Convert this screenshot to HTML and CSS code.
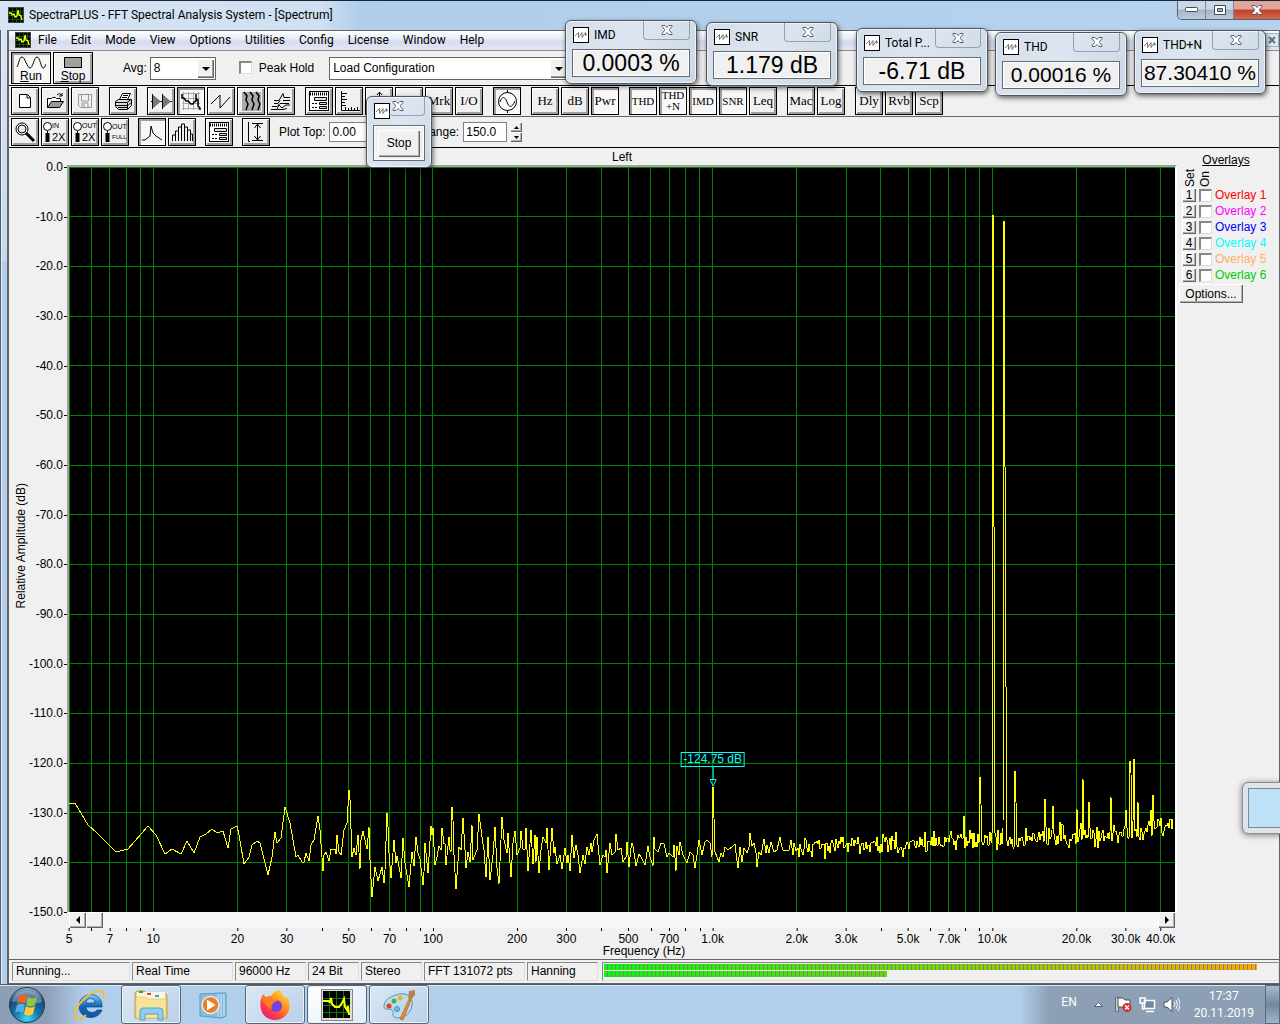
FILE: index.html
```html
<!DOCTYPE html>
<html lang="en">
<head>
    <meta charset="UTF-8">
    <meta name="viewport" content="width=device-width, initial-scale=1.0">
    <title>SpectraPLUS - FFT Spectral Analysis System - [Spectrum]</title>
    <link rel="stylesheet" href="styles.css">
</head>
<body>

    <!-- Shared icons -->
    <svg class="defs" aria-hidden="true">
        <symbol id="app" viewBox="0 0 16 16">
            <rect width="16" height="16" fill="#444"/><rect x="1" y="1" width="14" height="14" fill="#000"/>
            <path d="M4.500 1v14M8.500 1v14M12.500 1v14M1 4.500h14M1 8.500h14M1 12.500h14" stroke="#075a07"/>
            <path d="M1 6h2l1 2 2-1 1 3 2-1 1-6 1 5 2 1 1 4" fill="none" stroke="#ff0" stroke-width="1.300"/>
        </symbol>
        <symbol id="wave" viewBox="0 0 16 16">
            <rect x=".5" y=".5" width="15" height="15" fill="#fff" stroke="#000"/>
            <path d="M2 9l3.500-3.500v5l3.500-5v5l3.500-5v3L14 7" fill="none" stroke="#555" stroke-width=".8"/>
        </symbol>
        <symbol id="cross" viewBox="0 0 12 10">
            <path d="M1 .5h3l2 2 2-2h3v1L8.500 4.500v1L11 8.500v1H8l-2-2-2 2H1v-1l2.500-3v-1L1 1.500z" fill="#fff" stroke="#565d6b"/>
        </symbol>
        <symbol id="form" viewBox="0 0 24 24">
            <rect x="2.500" y="2.500" width="19" height="19" fill="#fff" stroke="#000"/>
            <path d="M3 5h18" stroke="#000" stroke-width="3" stroke-dasharray="1 1"/>
            <path d="M7.500 8.500h12v3h-12zM12.500 13.500h7v2h-7zM12.500 17.500h7v2h-7z" fill="#ddd" stroke="#000"/>
            <path d="M5 14.500h6M5 18.500h6" stroke="#000" stroke-dasharray="2 1"/>
        </symbol>
        <symbol id="lens" viewBox="0 0 24 24">
            <circle cx="5.500" cy="6.500" r="4" fill="#fff" stroke="#000"/>
            <path d="M5.500 11v3" stroke="#000"/><path d="M5.500 13v9" stroke="#000" stroke-width="4"/>
        </symbol>
    </svg>

    <main class="window">
        <header class="titlebar">
            <svg class="icon16"><use href="#app"/></svg>
            <h1>SpectraPLUS - FFT Spectral Analysis System - [Spectrum]</h1>
            <div class="caption-buttons">
                <button aria-label="Minimize"><svg width="13" height="6"><rect x=".5" y=".5" width="12" height="4" rx="1" fill="#fff" stroke="#444b5a"/></svg></button>
                <button aria-label="Restore"><svg width="12" height="10"><path d="M.5.5h11v9H.5z" fill="#fff" stroke="#444b5a"/><path d="M3.500 3.500h5v3h-5z" fill="#9fb0c5" stroke="#444b5a"/></svg></button>
                <button class="close" aria-label="Close"><svg width="12" height="10"><use href="#cross"/></svg></button>
            </div>
        </header>

        <div class="client">
            <nav class="menubar">
                <svg class="icon16"><use href="#app"/></svg>
                <button>File</button>
                <button>Edit</button>
                <button>Mode</button>
                <button>View</button>
                <button>Options</button>
                <button>Utilities</button>
                <button>Config</button>
                <button>License</button>
                <button>Window</button>
                <button>Help</button>
                <button class="mdi-close" aria-label="Close document"><svg width="8" height="8"><path d="M1 1l6 6M7 1L1 7" stroke="#5d7186" stroke-width="2"/></svg></button>
            </nav>

            <div class="toolbar run-bar">
                <button class="big pressed"><svg width="30" height="13" viewBox="0 0 30 13"><path d="M1 11C3 8 3 1 6 1s5 11 8 11S18 1 21 1s4 11 6 11 2-2 3-4" fill="none" stroke="#000"/></svg><span><u>R</u>un</span></button>
                <button class="big"><svg width="30" height="13"><rect x="6.500" y="1.500" width="17" height="10" fill="#a0a0a0" stroke="#000"/></svg><span><u>S</u>top</span></button>
                <label class="avg" for="avg">Avg:</label>
                <span class="combo avg-combo"><select id="avg"><option>8</option></select></span>
                <label class="peak"><input type="checkbox"> Peak Hold</label>
                <span class="combo config-combo"><select aria-label="Configuration"><option>Load Configuration</option></select></span>
            </div>

            <div class="toolbar">
                <div class="group">
                    <button class="tool" aria-label="New"><svg><path d="M6.500 5.500h8l3 3v10h-11zM14 6v3h3" fill="#fff" stroke="#000"/></svg></button>
                    <button class="tool" aria-label="Open"><svg><path d="M4.500 18.500v-9h4l1-1h3l1 1h4v3" fill="#fff" stroke="#000"/><path d="M4.500 18.500l4-6h12l-4 6z" fill="#999" stroke="#000"/><path d="M14 6q3-3 5 1m0-3v3h-3" fill="none" stroke="#000"/></svg></button>
                    <button class="tool" aria-label="Save" disabled><svg><path d="M5.500 5.500h13v13h-11l-2-2zM8.500 6v6h7V6M9 18v-4h6v4M11 15v3" fill="none" stroke="#999"/></svg></button>
                </div>
                <div class="group">
                    <button class="tool" aria-label="Print"><svg><path d="M8.500 10.500l3-6h8l-3 6" fill="#fff" stroke="#000"/><path d="M12 6.500h5M11 8.500h5" stroke="#000"/><path d="M4.500 12.500l3-2h13v6l-4 4h-9l-3-3z" fill="#ddd" stroke="#000"/><path d="M5 13.500h11l4-3M5 16.500h12l3-3M7 18.500h9M16.500 14v6" fill="none" stroke="#000"/></svg></button>
                </div>
                <div class="group">
                    <button class="tool" aria-label="Time series"><svg><path d="M2 12.500h21" stroke="#000"/><path d="M3.500 5v15M5.500 7v11M7.500 9v7M9.500 11v3M13.500 5v15M15.500 7v11M17.500 9v7M19.500 11v3" stroke="#000"/><path d="M4 6l8 6.500L4 19M14 6l8 6.500L14 19" fill="#777"/></svg></button>
                    <button class="tool pressed" aria-label="Spectrum"><svg><path d="M3 4.500h18M3 9.500h18M3 14.500h18M3 19.500h18M4.500 3v18M9.500 3v18M14.500 3v18M19.500 3v18" stroke="#aaa"/><path d="M3 5v4h2l2 3h2l3 3h2l1-2 2-1V5m0 5l2 1v6l2 2v2" fill="none" stroke="#000" stroke-width="1.500"/></svg></button>
                    <button class="tool" aria-label="Phase"><svg><path d="M2 15L11 6v13L21 8" fill="none" stroke="#000"/></svg></button>
                    <button class="tool" aria-label="Spectrogram"><svg><rect x="3" y="3" width="19" height="19" fill="#aaa"/><path d="M5 3l3 4-1 4 2 4-2 6M11 3l3 4-1 4 2 4-2 6M17 3l3 4-1 4 2 4-2 6" fill="none" stroke="#000" stroke-width="1.500"/></svg></button>
                    <button class="tool" aria-label="3-D surface"><svg><path d="M2 20.500h12l4-1M3 17.500h5l3-3h9M5 14.500h4l2-3M14 11.500h7M5 11.500h5l4-7 1 4h6M8 20l2-4 3 3 4-3h4" fill="none" stroke="#000"/></svg></button>
                </div>
                <div class="group">
                    <button class="tool" aria-label="Settings"><svg><use href="#form"/></svg></button>
                    <button class="tool" aria-label="Scaling"><svg><path d="M4.500 2v19.500H23M5 4.500h5M5 7.500h3M5 10.500h5M5 13.500h3M5 16.500h4M8.500 18v3M11.500 19v2M14.500 18v3M17.500 19v2M20.500 18v3" fill="none" stroke="#000"/></svg></button>
                    <button class="tool" aria-label="Calibration"><svg><path d="M12.500 3v18M10 6l2.500-3L15 6" fill="none" stroke="#000"/></svg></button>
                    <button class="tool" aria-label="Markers"><svg><path d="M12 8v13M8 12h8" stroke="#000"/></svg></button>
                    <button class="tool">Mrk</button>
                    <button class="tool">I/O</button>
                </div>
                <div class="group">
                    <button class="tool pressed" aria-label="Signal generator"><svg><circle cx="12.500" cy="12.500" r="9" fill="#fff" stroke="#000"/><path d="M12.500 1v3M12.500 21v3M5 13c2-6 5-6 7 0s5 6 8-1" fill="none" stroke="#000"/></svg></button>
                </div>
                <div class="group">
                    <button class="tool">Hz</button>
                    <button class="tool">dB</button>
                    <button class="tool pressed">Pwr</button>
                </div>
                <div class="group">
                    <button class="tool narrow pressed">THD</button>
                    <button class="tool narrow pressed">THD<br>+N</button>
                    <button class="tool narrow pressed">IMD</button>
                    <button class="tool narrow pressed">SNR</button>
                    <button class="tool">Leq</button>
                </div>
                <div class="group">
                    <button class="tool">Mac</button>
                    <button class="tool">Log</button>
                </div>
                <div class="group">
                    <button class="tool">Dly</button>
                    <button class="tool">Rvb</button>
                    <button class="tool">Scp</button>
                </div>
            </div>

            <div class="toolbar plot-bar">
                <div class="group">
                    <button class="tool" aria-label="Zoom"><svg><circle cx="9" cy="9" r="6" fill="#fff" stroke="#000"/><circle cx="9" cy="9" r="4" fill="#eee" stroke="#000"/><path d="M13 13l8 8" stroke="#000" stroke-width="3"/></svg></button>
                    <button class="tool zoom"><svg><use href="#lens"/></svg><span>IN<b>2X</b></span></button>
                    <button class="tool zoom"><svg><use href="#lens"/></svg><span>OUT<b>2X</b></span></button>
                    <button class="tool zoom"><svg><use href="#lens"/></svg><span>OUT<i>FULL</i></span></button>
                </div>
                <div class="group">
                    <button class="tool pressed" aria-label="Line plot"><svg><path d="M2 20h3l5-4 1-10 2 7 3 3 6 4" fill="none" stroke="#000"/></svg></button>
                    <button class="tool" aria-label="Bar plot"><svg><path d="M2.500 21v-6h3v-4h3V7h3V4h3v3h3v3h3v4h2v7M5.500 21V11M8.500 21V7M11.500 21V5M14.500 21V5M17.500 21V8M20.500 21V11" fill="none" stroke="#000"/></svg></button>
                </div>
                <div class="group">
                    <button class="tool" aria-label="Plot options"><svg><use href="#form"/></svg></button>
                </div>
                <div class="group">
                    <button class="tool" aria-label="Autoscale"><svg><path d="M4.500 2v19.500H6M8 3.500h11M8 20.500h11M13.500 4v16M10.500 8l3-4 3 4M10.500 16l3 4 3-4" fill="none" stroke="#000"/></svg></button>
                </div>
                <label for="top">Plot Top:</label>
                <input id="top" class="field top-field" type="text" value="0.00">
                <label for="range">Plot Range:</label>
                <input id="range" class="field" type="text" value="150.0">
                <span class="spinner">
                    <button aria-label="Increase range"><svg width="5" height="3"><path d="M0 3l2.500-3L5 3z"/></svg></button>
                    <button aria-label="Decrease range"><svg width="5" height="3"><path d="M0 0l2.500 3L5 0z"/></svg></button>
                </span>
            </div>

            <section class="view">
                <div class="y-title">Relative Amplitude (dB)</div>
                <ul class="y-labels" id="yLabels"></ul>
                <div class="chart">
                    <h2>Left</h2>
                    <div class="plot">
                        <svg viewBox="0 0 1106 745" preserveAspectRatio="none">
                            <path id="grid" class="grid"/>
                            <path id="trace" class="trace"/>
                        </svg>
                        <div class="marker">
                            <span>-124.75 dB</span>
                            <svg width="7" height="20"><path d="M3.500 0v12M0 12.500h7M.5 13l3 6 3-6" fill="none" stroke="#0ff"/></svg>
                        </div>
                    </div>
                    <div class="scrollbar">
                        <button aria-label="Scroll left"><svg width="4" height="8"><path d="M4 0v8L0 4z"/></svg></button>
                        <button class="thumb" aria-label="Scroll position"></button>
                        <button class="right" aria-label="Scroll right"><svg width="4" height="8"><path d="M0 0v8l4-4z"/></svg></button>
                    </div>
                    <ul class="x-labels" id="xLabels"></ul>
                    <div class="x-title">Frequency (Hz)</div>
                </div>
                <aside class="overlays">
                    <h2>Overlays</h2>
                    <div class="heads"><span>Set</span><span>On</span></div>
                    <div class="row"><button>1</button><label class="c1"><input type="checkbox">Overlay 1</label></div>
                    <div class="row"><button>2</button><label class="c2"><input type="checkbox">Overlay 2</label></div>
                    <div class="row"><button>3</button><label class="c3"><input type="checkbox">Overlay 3</label></div>
                    <div class="row"><button>4</button><label class="c4"><input type="checkbox">Overlay 4</label></div>
                    <div class="row"><button>5</button><label class="c5"><input type="checkbox">Overlay 5</label></div>
                    <div class="row"><button>6</button><label class="c6"><input type="checkbox">Overlay 6</label></div>
                    <button class="options">Options...</button>
                </aside>
            </section>

            <footer class="statusbar">
                <span class="wide">Running...</span>
                <span class="mid">Real Time</span>
                <span class="rate">96000 Hz</span>
                <span class="bits">24 Bit</span>
                <span class="chan">Stereo</span>
                <span class="mid">FFT 131072 pts</span>
                <span class="rate">Hanning</span>
                <div class="meters">
                    <div class="meter" style="width: 97%"></div>
                    <div class="meter low" style="width: 42%"></div>
                </div>
            </footer>
        </div>
    </main>

    <!-- Floating readouts -->
    <section class="float imd large">
        <header><svg class="icon16"><use href="#wave"/></svg><h3>IMD</h3><button aria-label="Close IMD"><svg width="12" height="10"><use href="#cross"/></svg></button></header>
        <output>0.0003 %</output>
    </section>
    <section class="float snr large">
        <header><svg class="icon16"><use href="#wave"/></svg><h3>SNR</h3><button aria-label="Close SNR"><svg width="12" height="10"><use href="#cross"/></svg></button></header>
        <output>1.179 dB</output>
    </section>
    <section class="float power large">
        <header><svg class="icon16"><use href="#wave"/></svg><h3>Total P...</h3><button aria-label="Close Total Power"><svg width="12" height="10"><use href="#cross"/></svg></button></header>
        <output>-6.71 dB</output>
    </section>
    <section class="float thd">
        <header><svg class="icon16"><use href="#wave"/></svg><h3>THD</h3><button aria-label="Close THD"><svg width="12" height="10"><use href="#cross"/></svg></button></header>
        <output>0.00016 %</output>
    </section>
    <section class="float thdn">
        <header><svg class="icon16"><use href="#wave"/></svg><h3>THD+N</h3><button aria-label="Close THD+N"><svg width="12" height="10"><use href="#cross"/></svg></button></header>
        <output>87.30410 %</output>
    </section>
    <section class="float stopper">
        <header><svg class="icon16"><use href="#wave"/></svg><button aria-label="Close Stop"><svg width="12" height="10"><use href="#cross"/></svg></button></header>
        <div class="box"><button>Stop</button></div>
    </section>
    <div class="edge-window"></div>

    <footer class="taskbar">
        <button class="start" aria-label="Start">
            <svg width="38" height="38" viewBox="0 0 38 38">
                <defs>
                    <radialGradient id="orb" cx=".5" cy=".9" r=".9"><stop offset="0" stop-color="#3fd8f5"/><stop offset=".4" stop-color="#1672ac"/><stop offset=".75" stop-color="#1c4a75"/><stop offset="1" stop-color="#9dbbd0"/></radialGradient>
                </defs>
                <circle cx="19" cy="19" r="17.500" fill="url(#orb)" stroke="#173a5c"/>
                <path d="M4 16C7 1 31 1 34 16 24 20 14 13 4 16z" fill="#fff" opacity=".3"/>
                <path d="M11 10c3-2 5-2 8 0l-2 8c-3-2-5-2-8 0z" fill="#f0612a"/>
                <path d="M20 11c3 2 6 2 9 0l-2 8c-3 2-6 2-9 0z" fill="#93c83d"/>
                <path d="M9 19c3-2 5-2 8 0l-2 8c-3-2-5-2-8 0z" fill="#4fb0ea"/>
                <path d="M18 20c3 2 6 2 9 0l-2 8c-3 2-6 2-9 0z" fill="#fdcb3a"/>
            </svg>
        </button>
        <button class="task plain" aria-label="Internet Explorer">
            <svg width="34" height="32" viewBox="0 0 34 32">
                <defs><linearGradient id="ie" x2="0" y2="1"><stop offset="0" stop-color="#7ed0f8"/><stop offset=".5" stop-color="#1368b8"/><stop offset="1" stop-color="#0e56a4"/></linearGradient></defs>
                <path d="M30 18H14c0 6 9 7 11 3h5c-4 11-23 10-23-4 0-15 24-16 23 1zM14 14h9c0-6-9-6-9 0z" fill="url(#ie)" stroke="#0b3f80" stroke-width=".7"/>
                <path d="M31 9C35-2 20 1 11 11 3 19 1 29 5 30c3 1 7-2 9-4" fill="none" stroke="#f3bd35" stroke-width="2"/>
            </svg>
        </button>
        <button class="task" aria-label="Windows Explorer">
            <svg width="34" height="32" viewBox="0 0 34 32">
                <path d="M1 4l2-2h7l2 2h19l2 3v22H1z" fill="#ecd27a" stroke="#b89b45"/>
                <path d="M3 3h28v9H3z" fill="#fbf6df"/>
                <path d="M5 2h4v2H5z" fill="#28a83a"/><path d="M13 4h4v2h-4z" fill="#dd4a33"/><path d="M21 6h4v2h-4z" fill="#3c9bea"/>
                <path d="M2 8h10l2 2h18v19H2z" fill="#f7e49b" stroke="#d8bd62" stroke-width=".6"/>
                <path d="M6 31V22q0-3 3-3h17q3 0 3 3v9h-5v-6H11v6z" fill="#8ed0ee" stroke="#5a9fc4"/>
            </svg>
        </button>
        <button class="task plain" aria-label="Media Player">
            <svg width="30" height="28" viewBox="0 0 30 28">
                <path d="M2 3l22-1h4v23l-4 2-22-2z" fill="#88bcdc" stroke="#5d9cc2"/><path d="M20 3v23M23 3v23M26 3v22" stroke="#d2ebf8"/>
                <circle cx="12.500" cy="14" r="8.500" fill="#f47b20" stroke="#e1eef6" stroke-width="1.500"/><path d="M9 8.500v11l8.500-5.500z" fill="#fff"/>
            </svg>
        </button>
        <button class="task" aria-label="Firefox">
            <svg width="32" height="32" viewBox="0 0 32 32">
                <defs><linearGradient id="ff" x1="1" y1="0" x2=".2" y2="1"><stop offset="0" stop-color="#fff14a"/><stop offset=".4" stop-color="#ff9a1f"/><stop offset=".75" stop-color="#ff3b47"/><stop offset="1" stop-color="#e31587"/></linearGradient></defs>
                <path d="M21 1c1 4 4 5 5 8l2-1c7 12-1 23-12 23S-2 20 3 7l2-2 1 3 5-1 1 0c2-3 5-6 9-6z" fill="url(#ff)"/>
                <circle cx="17" cy="17" r="6" fill="#7542e5"/>
                <path d="M3 8l4 1 5-2c0 3 3 3 7 4-1 2-5 2-5 4-2 1-2 3-1 5-5-2-9-6-10-12z" fill="#ff7e1c"/>
            </svg>
        </button>
        <button class="task active" aria-label="SpectraPLUS">
            <svg width="32" height="32" viewBox="0 0 32 32">
                <rect x=".5" y=".5" width="31" height="31" fill="#ddd" stroke="#888"/><rect x="2" y="2" width="27" height="27" fill="#000"/>
                <path d="M8.500 2v27M15.500 2v27M22.500 2v27M2 9.500h27M2 16.500h27M2 23.500h27" stroke="#087a08"/>
                <path d="M2 12h5l2 1 1-4 1 6 3 3h4l3-4 2-4 1 8 2 3 1-4 1 9" fill="none" stroke="#ff0" stroke-width="2"/>
            </svg>
        </button>
        <button class="task" aria-label="Paint">
            <svg width="34" height="32" viewBox="0 0 34 32">
                <path d="M14 6c10-4 18 2 16 11-2 10-12 14-18 11-3-2 1-5-2-7s-8 1-8-4S7 8 14 6z" fill="#b9dcef" stroke="#4f94bd"/>
                <circle cx="7" cy="17" r="2.500" fill="#e33d2f"/><circle cx="12" cy="12" r="2.500" fill="#4eae3c"/><circle cx="18" cy="9" r="2.500" fill="#f6b221"/><circle cx="15" cy="20" r="2.500" fill="#7ab8dc" stroke="#4b8bb3"/>
                <path d="M18 30l9-20 2 1-8 20z" fill="#e98a2e" stroke="#a95713" stroke-width=".6"/><path d="M26 9l1-7 6-1 0 5-4 5z" fill="#b98254"/>
            </svg>
        </button>
        <div class="tray">
            <span class="lang">EN</span>
            <svg class="caret" width="9" height="5"><path d="M.5 4.500l4-4 4 4z" fill="#fff" stroke="#4b5f75"/></svg>
            <svg width="17" height="17" viewBox="0 0 17 17"><path d="M2 1v15" stroke="#333" stroke-width="3"/><path d="M2 1.500v14" stroke="#fff" stroke-width="1.500"/><path d="M3 2h5l2 2h5v7H3z" fill="#fff" stroke="#455"/><circle cx="12" cy="11.500" r="4.500" fill="#dc2b22"/><path d="M10 9.500l4 4m0-4l-4 4" stroke="#fff" stroke-width="1.500"/></svg>
            <svg width="17" height="17" viewBox="0 0 17 17"><path d="M5.500 4.500h10v8h-10z" fill="#70869c" stroke="#fff" stroke-width="1.500"/><path d="M7 15.500h8M1 2h5v5H1zM3.500 7v6h2" fill="none" stroke="#fff" stroke-width="1.500"/></svg>
            <svg width="17" height="17" viewBox="0 0 17 17"><path d="M1 6h3l5-4.500v14L4 11H1z" fill="#fff" stroke="#455"/><path d="M11 6q2 2.500 0 5M13 4q3 4.500 0 9M15 2q4 6.500 0 13" fill="none" stroke="#fff"/></svg>
            <time class="clock">17:37<br>20.11.2019</time>
            <button class="show-desktop" aria-label="Show desktop"></button>
        </div>
    </footer>

<script src="script.js"></script>
</body>
</html>
```

FILE: styles.css
```css
* {
    box-sizing: border-box;
}

body {
    margin: 0;
    min-height: 100vh;
    display: flex;
    flex-direction: column;
    position: relative;
    overflow: hidden;
    font-family: "Liberation Sans", Arial, sans-serif;
    font-size: 12px;
    line-height: 14px;
    color: #000;
    background: #b1ceea;
}

h1, h2, h3, ul {
    margin: 0;
    padding: 0;
    font-size: 12px;
    font-weight: normal;
    list-style: none;
}

button, input, select {
    font: inherit;
    color: inherit;
    margin: 0;
    padding: 0;
    border: 0;
    border-radius: 0;
    background: #f0f0f0;
}

svg {
    display: block;
    flex: none;
}

.defs {
    position: absolute;
    width: 0;
    height: 0;
}

.icon16 {
    width: 16px;
    height: 16px;
}

/* Main window frame */
.window {
    flex: 1;
    display: flex;
    flex-direction: column;
    padding: 0 0 0 7px;
    border-top: 1px solid #1d2430;
    background: linear-gradient(#dbe7f4, #c5d9ee 260px, #b1ceea 261px);
    box-shadow: inset 1px 0 #54606e, inset 2px 0 #e5eef8;
}

.titlebar {
    display: flex;
    height: 29px;
    margin-left: -7px;
    padding: 0 0 2px 8px;
    gap: 5px;
    align-items: center;
    background: linear-gradient(90deg, #d5e4f2, #cfe0f1 320px, #b0ceeb 360px, #b5d2ee);
    font-family: Roboto, sans-serif;
}

.caption-buttons {
    display: flex;
    align-self: flex-start;
    margin-left: auto;
    height: 19px;
    border: 1px solid #55617a;
    border-width: 0 0 1px 1px;
    border-radius: 0 0 0 5px;
    overflow: hidden;
}

.caption-buttons button {
    display: grid;
    place-items: center;
    width: 28px;
    border-right: 1px solid #7a8798;
    background: linear-gradient(#cbd8e6 45%, #a4b4c7 50%, #bccbdc);
}

.caption-buttons .close {
    width: 46px;
    border: 0;
    background: linear-gradient(#e0a69b 45%, #c23f28 50%, #cf6a4d);
}

.client {
    flex: 1;
    display: flex;
    flex-direction: column;
    border: solid #646464;
    border-width: 1px 1px 1px 2px;
    background: #f0f0f0;
}

.menubar {
    display: flex;
    align-items: center;
    height: 20px;
    padding: 0 0 2px 6px;
    border-bottom: 1px solid #888;
    background: linear-gradient(#fff, #e9edf8 40%, #d6dcef 55%, #e2e6f4);
    font-family: Roboto, sans-serif;
}

.menubar button {
    padding: 0 7px;
    background: none;
}

.menubar .mdi-close {
    margin-left: auto;
    padding: 2px;
    border: 1px solid #9fb0c4;
    background: #dfe9f5;
}

/* Toolbars */
.toolbar {
    display: flex;
    align-items: center;
    height: 31px;
    padding-left: 2px;
    gap: 10px;
    border-bottom: 1px solid #646464;
}

.run-bar {
    height: 35px;
    gap: 0;
    border-color: #000;
}

.plot-bar {
    gap: 9px;
    border-color: #000;
}

.group {
    display: flex;
    gap: 2px;
}

.big, .tool {
    border: 1px solid #000;
    box-shadow: inset 1px 1px #fff, inset -2px -2px #a0a0a0;
}

.pressed {
    box-shadow: inset 2px 2px #a0a0a0, inset -1px -1px #fff;
    background: #f7f7f7;
}

.big {
    display: flex;
    flex-direction: column;
    align-items: center;
    width: 40px;
    height: 32px;
    margin-right: 2px;
    padding-top: 3px;
}

.tool {
    display: grid;
    place-items: center;
    width: 28px;
    height: 28px;
    font-family: "Liberation Serif", serif;
    font-size: 13px;
    white-space: nowrap;
}

.tool svg {
    width: 24px;
    height: 24px;
}

.narrow {
    font-size: 11px;
    line-height: 11px;
}

.zoom {
    display: flex;
    justify-content: flex-start;
    align-items: center;
    overflow: hidden;
    font-family: "Liberation Sans", sans-serif;
    font-size: 7px;
    line-height: 10px;
}

.zoom svg {
    margin-right: -14px;
}

.zoom span {
    text-align: left;
}

.zoom b, .zoom i {
    display: block;
    font-weight: normal;
    font-style: normal;
}

.zoom b {
    font-size: 11px;
    line-height: 12px;
}

.zoom i {
    font-size: 6px;
}

.avg {
    margin-left: 28px;
}

.combo {
    position: relative;
    height: 23px;
    border: 1px solid #646464;
}

.avg-combo {
    width: 66px;
    margin-left: 3px;
}

.config-combo {
    width: 240px;
    margin-left: 15px;
}

.combo select {
    appearance: none;
    width: 100%;
    height: 100%;
    padding-left: 3px;
    background: #fff;
}

.combo::before {
    content: "";
    position: absolute;
    top: 1px;
    right: 1px;
    width: 17px;
    height: 19px;
    background: #f0f0f0;
    box-shadow: inset 1px 1px #fff, inset -1px -1px #646464, inset -2px -2px #a0a0a0;
    pointer-events: none;
}

.combo::after {
    content: "";
    position: absolute;
    top: 9px;
    right: 5px;
    border: 4px solid transparent;
    border-top-color: #000;
    border-bottom: 0;
    pointer-events: none;
}

.peak {
    display: flex;
    gap: 7px;
    margin-left: 23px;
}

input[type="checkbox"] {
    appearance: none;
    width: 13px;
    height: 13px;
    background: #fff;
    border: solid;
    border-width: 2px 1px 1px 2px;
    border-color: #888 #ddd #ddd #888;
}

.field {
    width: 44px;
    height: 20px;
    margin-left: -5px;
    padding-left: 2px;
    border: 1px solid #828282;
    background: #fff;
}

.top-field {
    width: 58px;
}

.spinner {
    display: flex;
    flex-direction: column;
    margin-left: -6px;
}

.spinner button {
    display: grid;
    place-items: center;
    width: 12px;
    height: 10px;
}

.spinner button, .scrollbar button, .overlays button, .box button {
    box-shadow: inset 1px 1px #fff, inset -1px -1px #646464, inset -2px -2px #b0b0b0;
}

/* Spectrum view */
.view {
    flex: 1;
    display: flex;
}

.y-title {
    align-self: center;
    width: 19px;
    padding-right: 5px;
    padding-top: 16px;
    writing-mode: vertical-rl;
    transform: rotate(180deg);
    text-align: center;
}

.y-labels {
    display: flex;
    flex-direction: column;
    justify-content: space-between;
    width: 39px;
    padding: 12px 0 39px;
    line-height: 15px;
    white-space: nowrap;
}

.y-labels li {
    display: flex;
    align-items: center;
    justify-content: flex-end;
    height: 15px;
}

.y-labels li::after {
    content: "";
    width: 3px;
    height: 1px;
    margin-left: 1px;
    background: #000;
}

.chart {
    flex: 1;
    display: flex;
    flex-direction: column;
    text-align: center;
}

.chart h2 {
    height: 17px;
    line-height: 18px;
}

.plot {
    flex: 1;
    position: relative;
    border: solid;
    border-width: 2px 2px 0 2px;
    border-color: #a0a0a0 #fff #a0a0a0 #a0a0a0;
    background: #000;
}

.plot > svg {
    position: absolute;
    width: 100%;
    height: 100%;
}

.grid, .trace {
    fill: none;
    shape-rendering: crispEdges;
    vector-effect: non-scaling-stroke;
}

.grid {
    stroke: #008000;
}

.trace {
    stroke: #ff0;
}

/* Peak marker sits on the 1 kHz line */
.marker {
    position: absolute;
    left: 58.2%;
    top: 78.5%;
    display: flex;
    flex-direction: column;
    align-items: center;
    transform: translateX(-50%);
    color: #0ff;
    white-space: nowrap;
}

.marker span {
    padding: 0 2px;
    border: 1px solid #0ff;
    line-height: 13px;
}

.scrollbar {
    display: flex;
    height: 16px;
    margin: 0 2px;
    background: repeating-conic-gradient(#f0f0f0 0 25%, #fff 0 50%) 0 0 / 2px 2px;
}

.scrollbar button {
    display: grid;
    place-items: center;
    width: 17px;
}

.scrollbar .right {
    margin-left: auto;
}

.x-labels {
    position: relative;
    height: 17px;
    margin: 0 2px;
}

.x-labels li {
    position: absolute;
    padding-top: 4px;
    transform: translateX(-50%);
}

.x-labels li::before {
    content: "";
    position: absolute;
    top: 0;
    left: 50%;
    width: 1px;
    height: 3px;
    background: #000;
}

.x-title {
    height: 14px;
    padding-left: 44px;
    line-height: 12px;
}

.overlays {
    width: 102px;
    padding: 5px 0 0 2px;
}

.overlays h2 {
    text-align: center;
    text-decoration: underline;
    padding-right: 6px;
}

.heads {
    display: flex;
    gap: 1px;
    height: 20px;
    padding-left: 4px;
}

.heads span {
    writing-mode: vertical-rl;
    transform: rotate(180deg);
}

.row {
    display: flex;
    align-items: center;
    gap: 3px;
    height: 16px;
    padding-left: 3px;
}

.row button {
    width: 14px;
    height: 14px;
}

.row label {
    display: flex;
    align-items: center;
    gap: 3px;
    white-space: nowrap;
}

.c1 { color: #f00; }
.c2 { color: #f0f; }
.c3 { color: #00f; }
.c4 { color: #0ff; }
.c5 { color: #ffb060; }
.c6 { color: #0c0; }

.overlays .options {
    width: 64px;
    height: 19px;
    margin-top: 1px;
}

/* Status bar */
.statusbar {
    display: flex;
    gap: 2px;
    height: 24px;
    padding: 2px 0 2px 3px;
    border-top: 1px solid #646464;
}

.statusbar span, .meters {
    border: solid;
    border-width: 1px;
    border-color: #888 #ddd #ddd #888;
    padding: 1px 3px;
    white-space: nowrap;
}

.statusbar .wide { width: 118px; }
.statusbar .mid { width: 101px; }
.statusbar .rate { width: 71px; }
.statusbar .bits { width: 51px; }
.statusbar .chan { width: 61px; }

.statusbar .meters {
    flex: 1;
    display: flex;
    flex-direction: column;
    gap: 1px;
    margin-left: 2px;
    padding: 1px;
}

.meter {
    height: 6px;
    background: repeating-linear-gradient(90deg, transparent 0 3px, #808080 3px 4px), linear-gradient(90deg, #0f0, #7fd400 55%, #ffa600);
}

.meter.low {
    background: repeating-linear-gradient(90deg, transparent 0 3px, #808080 3px 4px), linear-gradient(90deg, #0f0, #62dc00);
}

/* Floating readout windows */
.float {
    position: absolute;
    width: 132px;
    height: 64px;
    padding: 0 6px 6px;
    border: 1px solid #4f565e;
    border-radius: 6px;
    background: linear-gradient(120deg, #d3dde9, #dde6f0 45%, #ccd8e5);
    box-shadow: inset 0 0 0 1px #edf3f9, 1px 2px 5px rgba(0, 0, 0, .6);
    font-family: Roboto, sans-serif;
}

.float header {
    display: flex;
    align-items: center;
    gap: 5px;
    height: 28px;
    padding-left: 1px;
    white-space: nowrap;
}

.float header > button {
    display: grid;
    place-items: center;
    align-self: flex-start;
    width: 47px;
    height: 19px;
    margin-left: auto;
    border: 1px solid #97a1ae;
    border-top: 0;
    border-radius: 0 0 4px 4px;
    background: none;
}

.float output, .box {
    display: grid;
    place-items: center;
    height: 28px;
    border: 1px solid #646b75;
    background: #f0f0f0;
    box-shadow: inset 0 0 0 1px #fff;
    font-family: "Liberation Sans", Arial, sans-serif;
    font-size: 21px;
    line-height: 26px;
    white-space: nowrap;
}

.large output {
    font-size: 23px;
}

.imd { left: 565px; top: 20px; }
.snr { left: 706px; top: 22px; }
.power { left: 856px; top: 28px; }
.thd { left: 995px; top: 32px; }
.thdn { left: 1134px; top: 30px; }

.stopper {
    left: 366px;
    top: 96px;
    width: 66px;
    height: 72px;
}

.stopper header {
    gap: 0;
}

.stopper header > button {
    width: 44px;
    margin-left: -1px;
    padding-right: 18px;
    border-left: 0;
}

.box {
    height: 36px;
}

.box button {
    width: 42px;
    height: 27px;
    font-size: 12px;
    line-height: 14px;
}

.edge-window {
    position: absolute;
    right: -12px;
    top: 782px;
    width: 50px;
    height: 52px;
    border: 1px solid #8b9097;
    border-radius: 6px;
    background: #bde1f6;
    box-shadow: inset 0 0 0 5px #dfe4ec, inset 0 0 0 6px #888, 0 1px 6px rgba(0, 0, 0, .5);
}

/* Taskbar */
.taskbar {
    display: flex;
    height: 40px;
    gap: 2px;
    border-top: 1px solid #4d5965;
    box-shadow: inset 0 1px #d8e7f5;
    background: linear-gradient(90deg, #8c9fb5, #8c9fb5 45px, #b1ceea 85px, #b1ceea calc(100% - 260px), #8c9fb5 calc(100% - 230px));
}

.start {
    width: 57px;
    padding-left: 8px;
    background: none;
}

.task {
    display: grid;
    place-items: center;
    width: 60px;
    border: 1px solid #56677a;
    border-radius: 3px;
    background: linear-gradient(135deg, #dce8f4, #b9d0e7);
    box-shadow: inset 0 0 0 1px #e9f2fa;
}

.task.plain {
    border-color: transparent;
    background: none;
    box-shadow: none;
}

.task.active {
    background: linear-gradient(135deg, #fff, #dfebf7);
}

.tray {
    display: flex;
    align-items: center;
    margin-left: auto;
    gap: 7px;
    color: #fff;
    font-family: Roboto, sans-serif;
}

.lang {
    margin-right: 10px;
    padding-bottom: 6px;
}

.caret {
    margin-right: 5px;
}

.clock {
    margin: 0 4px 0 7px;
    text-align: center;
    line-height: 17px;
}

.show-desktop {
    align-self: stretch;
    width: 15px;
    border: 1px solid #58697d;
    background: linear-gradient(#a9b9ca, #7289a2 50%, #9fb4c9);
}
```

FILE: script.js
```js
const WIDTH = 1106;
const HEIGHT = 745;
const MIN_HZ = 5;
const MAX_HZ = 45000;

// Position of a frequency on the log axis, 0 to 1
function position(hz) {
    return Math.log(hz / MIN_HZ) / Math.log(MAX_HZ / MIN_HZ);
}

function formatHz(hz) {
    return hz < 1000 ? String(hz) : (hz / 1000).toFixed(1) + 'k';
}

// Grid and axes
let grid = '';
const xLabels = document.getElementById('xLabels');

for (let decade = 1; decade <= 10000; decade *= 10) {
    for (let n = 1; n <= 9; n++) {
        const hz = n * decade;
        if (hz < MIN_HZ || hz > MAX_HZ) continue;

        const x = Math.floor(position(hz) * WIDTH) + 0.5;
        grid += `M${x} 0V${HEIGHT}`;

        const item = document.createElement('li');
        item.style.left = position(hz) * 100 + '%';
        if ([1, 2, 3, 5, 7].includes(n) || hz === 40000) {
            item.textContent = formatHz(hz);
        }
        xLabels.appendChild(item);
    }
}

for (let db = 0; db <= 150; db += 10) {
    const y = Math.floor(db / 150 * HEIGHT) + 0.5;
    if (db < 150) grid += `M0 ${y}H${WIDTH}`;

    const item = document.createElement('li');
    item.textContent = (db ? '-' : '') + db.toFixed(1);
    document.getElementById('yLabels').appendChild(item);
}
document.getElementById('grid').setAttribute('d', grid);

// Spectrum trace up to 2 kHz
const low = `0,636 6,636 19,658 28,666 47,685 59,682 79,659 87,668 96,687 103,682 112,687 118,674 125,686
131,670 137,667 143,662 148,666 154,664 159,681 162,662 168,659 170,668 175,697 180,690 183,678 188,674
191,676 199,708 203,690 206,665 208,676 212,671 216,640 221,656 227,690 229,688 233,695 235,695 237,686
240,694 242,678 245,673 249,649 251,663 254,704 255,688 257,685 260,694 262,682 266,682 267,687 268,668
270,685 272,688 275,663 278,656 280,623 281,633 283,690 285,681 287,688 289,668 291,702 292,673 294,664
298,682 300,660 301,693 303,730 306,700 309,714 313,700 315,716 316,703 318,646 319,660 320,686 322,711
325,673 327,696 328,689 331,705 332,711 334,671 336,696 340,720 343,685 345,699 347,670 349,686 351,692
354,718 355,705 356,676 359,706 362,659 363,668 364,661 366,698 368,690 370,679 372,683 373,661 375,677
376,676 377,698 380,670 381,683 382,685 383,640 384,653 385,688 387,722 390,680 392,683 394,651 396,683
397,701 399,685 401,695 403,658 404,693 407,685 408,683 410,647 413,670 415,683 417,710 419,670 421,713
424,688 426,660 428,701 430,717 432,673 433,650 435,673 438,686 439,666 442,710 444,676 446,664 448,688
451,681 452,664 454,682 456,682 457,661 459,704 462,663 464,697 466,668 467,695 468,670 470,706 472,683
474,670 477,676 478,661 480,703 483,661 485,686 486,680 488,697 491,688 493,702 496,681 498,696 499,688
501,704 503,668 505,691 507,678 509,688 511,706 514,688 516,697 518,680 520,688 522,676 523,685 525,673
528,667 530,688 531,698 534,688 536,690 537,683 538,706 541,676 543,688 546,685 547,667 549,683 552,681
554,695 557,690 558,675 560,700 562,681 563,676 564,679 567,699 570,687 572,690 576,698 579,679 581,690
584,699 585,670 586,682 589,685 592,676 595,677 598,690 600,686 604,690 605,678 607,704 608,679 610,688
611,675 614,688 618,696 621,685 624,688 626,701 628,688 630,673 633,688 636,675 638,673 641,676 643,690
644,620 645,651 646,685 650,695 652,686 654,690 656,680 659,683 663,680 666,677 667,686 669,701 671,680
673,695 675,681 678,686 680,680 681,666 683,679 685,676 687,686 688,700 690,685 692,688 695,672 697,686
698,678 700,686 702,675 705,685 708,683 711,670 712,676 714,683 718,683 720,683 722,673 724,688 725,676
727,684 729,681 730,690`;

// Tones above the noise floor: x, y
const peaks = {
    895: 649, 911: 610, 912: 637, 924: 48, 925: 360, 935: 54, 936: 300, 937: 520, 946: 604, 947: 635,
    976: 632, 984: 639, 991: 655, 1008: 642, 1014: 612, 1020: 635, 1042: 630, 1057: 643, 1061: 594,
    1062: 606, 1065: 592, 1069: 635, 1082: 643, 1084: 628
};
const floorLine = [[731, 681], [880, 674], [980, 670], [1060, 667], [1080, 664], [1106, 654]];

function noiseFloor(x) {
    for (let i = 1; i < floorLine.length; i++) {
        const [x0, y0] = floorLine[i - 1];
        const [x1, y1] = floorLine[i];
        if (x <= x1) return y0 + (y1 - y0) * (x - x0) / (x1 - x0);
    }
    return floorLine[floorLine.length - 1][1];
}

let seed = 17;
function random() {
    seed = (seed * 16807) % 2147483647;
    return seed / 2147483647;
}

let trace = 'M' + low.replace(/\s+/g, 'L');
for (let x = 731; x < 1105; x++) {
    const y = noiseFloor(x) + (random() + random() + random() - 1.5) * 10;
    trace += `L${x} ${Math.round(peaks[x] || y)}`;
}
document.getElementById('trace').setAttribute('d', trace);
```
